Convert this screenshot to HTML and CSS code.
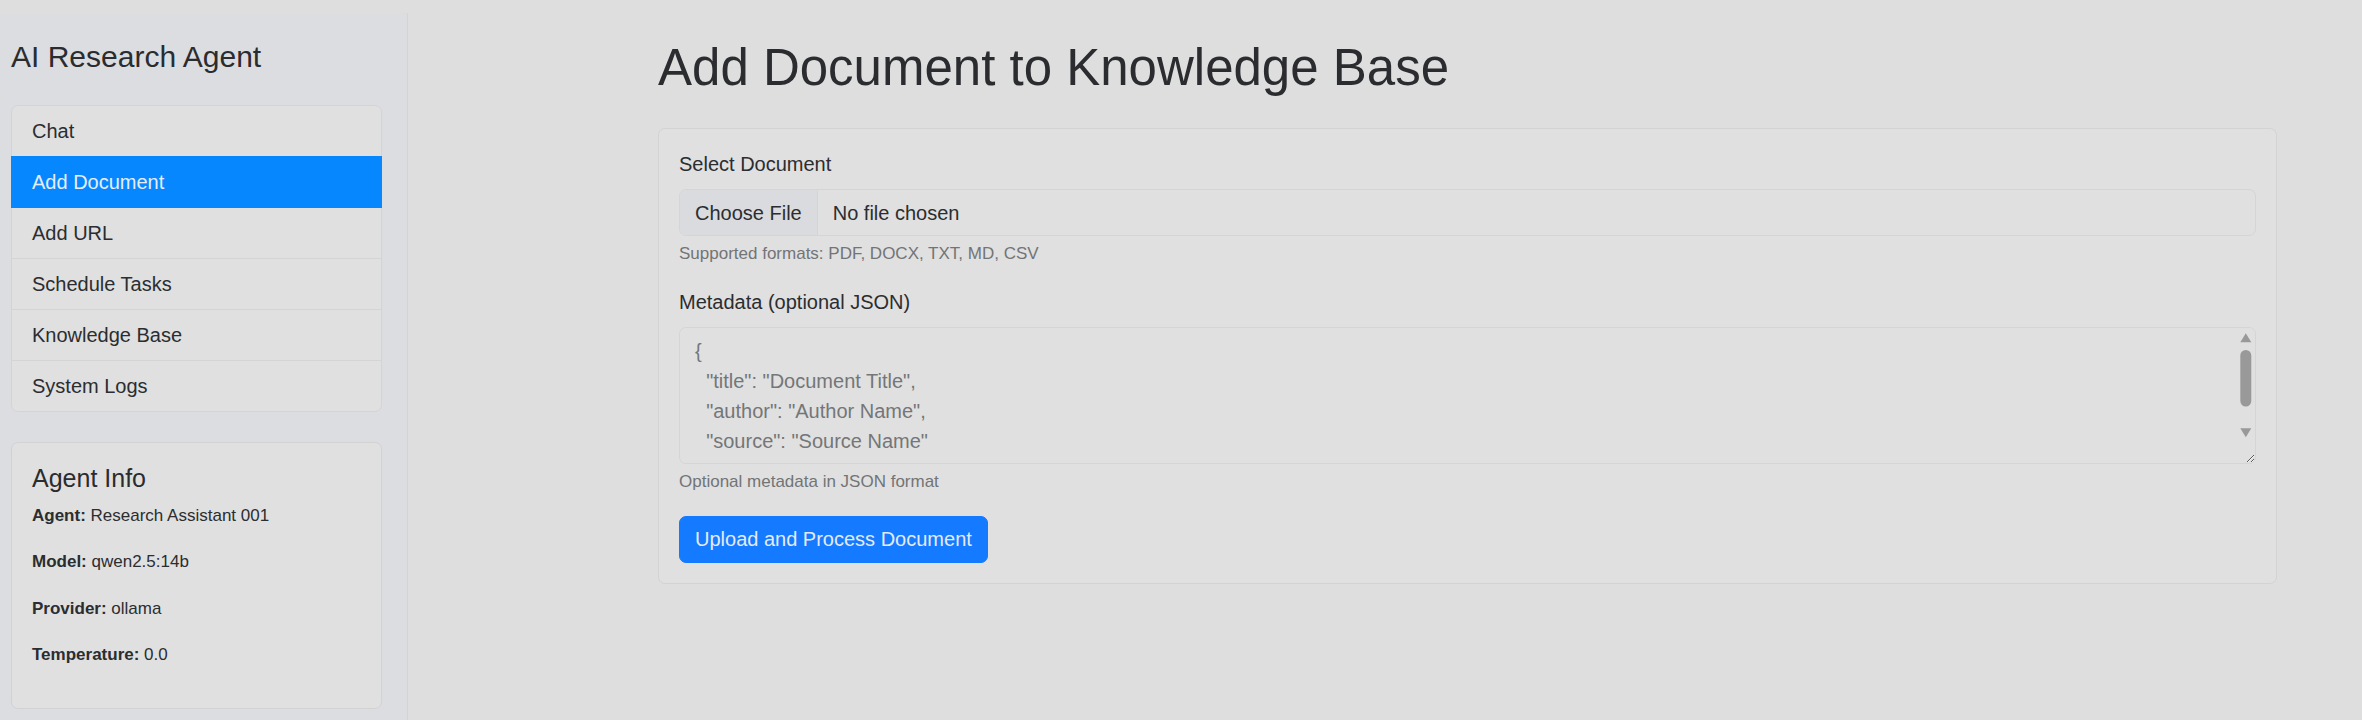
FILE: index.html
```html
<!DOCTYPE html>
<html lang="en">
<head>
<meta charset="utf-8">
<title>AI Research Agent - Add Document</title>
<link rel="stylesheet" href="styles.css">
</head>
<body>
<div class="layout">
  <aside class="sidebar">
    <h4 class="brand">AI Research Agent</h4>
    <nav class="nav-list">
      <a class="nav-item" href="#">Chat</a>
      <a class="nav-item active" href="#">Add Document</a>
      <a class="nav-item" href="#">Add URL</a>
      <a class="nav-item" href="#">Schedule Tasks</a>
      <a class="nav-item" href="#">Knowledge Base</a>
      <a class="nav-item" href="#">System Logs</a>
    </nav>
    <div class="info-card">
      <h5 class="info-title">Agent Info</h5>
      <p class="info-line"><strong>Agent:</strong> Research Assistant 001</p>
      <p class="info-line"><strong>Model:</strong> qwen2.5:14b</p>
      <p class="info-line"><strong>Provider:</strong> ollama</p>
      <p class="info-line"><strong>Temperature:</strong> 0.0</p>
    </div>
  </aside>
  <main class="main">
    <h1 class="page-title">Add Document to Knowledge Base</h1>
    <div class="card">
      <form class="form">
        <div class="field">
          <div class="label">Select Document</div>
          <label class="file-input">
            <input type="file" class="file-hidden">
            <span class="file-btn">Choose File</span>
            <span class="file-name">No file chosen</span>
          </label>
          <div class="hint">Supported formats: PDF, DOCX, TXT, MD, CSV</div>
        </div>
        <div class="field">
          <label class="label" for="meta">Metadata (optional JSON)</label>
          <div class="textarea-wrap">
            <textarea id="meta" class="textarea" rows="4">{
  "title": "Document Title",
  "author": "Author Name",
  "source": "Source Name"
}</textarea>
            <svg class="scrollbar" width="15" height="116" viewBox="0 0 15 116" aria-hidden="true">
              <polygon points="0.3,14.3 5.8,5.3 11.3,14.3" fill="#999999"/>
              <rect x="0.3" y="22" width="11" height="56.6" rx="5.5" fill="#999999"/>
              <polygon points="0.3,100.3 11.3,100.3 5.8,109.3" fill="#999999"/>
            </svg>
          </div>
          <div class="hint">Optional metadata in JSON format</div>
        </div>
        <button type="button" class="btn">Upload and Process Document</button>
      </form>
    </div>
  </main>
</div>
</body>
</html>
```

FILE: styles.css
```css
* {
  box-sizing: border-box;
}

html, body {
  margin: 0;
  padding: 0;
}

body {
  background: #dedede;
  color: #2b2d30;
  font-family: "Liberation Sans", Arial, sans-serif;
  font-size: 20px;
  line-height: 30px;
}

.layout {
  display: flex;
  align-items: stretch;
  min-height: 100vh;
  padding-top: 13px;
}

/* ---------- sidebar ---------- */
.sidebar {
  width: 408px;
  flex: 0 0 408px;
  background: #dcdde0;
  border-right: 1px solid #d3d4d7;
  padding: 26px 25px 0 11px;
}

.brand {
  margin: 0 0 30px;
  font-size: 30px;
  line-height: 36px;
  font-weight: 400;
  color: #2a2c2f;
}

.nav-list {
  display: flex;
  flex-direction: column;
  margin-bottom: 30px;
}

.nav-item {
  display: block;
  position: relative;
  padding: 10px 20px;
  background: #e0e0e0;
  color: #2b2d30;
  text-decoration: none;
  border: 1px solid #d4d4d6;
  margin-top: -1px;
}

.nav-item:first-child {
  margin-top: 0;
  border-radius: 7px 7px 0 0;
}

.nav-item:last-child {
  border-radius: 0 0 7px 7px;
}

.nav-item.active {
  z-index: 2;
  background: #0787fe;
  border-color: #0787fe;
  color: #e6edf8;
}

.info-card {
  background: #e0e0e0;
  border: 1px solid #d2d2d3;
  border-radius: 7px;
  padding: 20px;
}

.info-title {
  margin: 0 0 10px;
  font-size: 25px;
  line-height: 30px;
  font-weight: 400;
  color: #2a2c2f;
}

.info-line {
  margin: 0 0 20px;
  font-size: 17px;
  line-height: 26.25px;
}

.info-line strong {
  font-weight: 700;
}

/* ---------- main ---------- */
.main {
  flex: 1 1 auto;
  padding: 25px 85px 0 250px;
}

.page-title {
  margin: 0 0 30px;
  font-size: 51px;
  line-height: 60px;
  font-weight: 400;
  color: #2a2c2f;
}

.card {
  background: #e0e0e0;
  border: 1px solid #d3d3d3;
  border-radius: 7px;
  padding: 20px;
}

.form {
  display: flex;
  flex-direction: column;
  align-items: flex-start;
}

.field {
  width: 100%;
  margin-bottom: 20px;
}

.label {
  display: block;
  margin-bottom: 10px;
  color: #2b2d30;
}

.file-input {
  display: flex;
  align-items: stretch;
  width: 100%;
  border: 1px solid #d5d5d6;
  border-radius: 7px;
  overflow: hidden;
  background: #e0e0e0;
  cursor: pointer;
}

.file-hidden {
  display: none;
}

.file-btn {
  padding: 7.5px 15px;
  background: #dadbde;
  border-right: 1px solid #d5d5d6;
  color: #2b2d30;
}

.file-name {
  padding: 7.5px 15px;
  color: #2b2d30;
}

.hint {
  margin-top: 5px;
  font-size: 17px;
  line-height: 26.25px;
  color: #727476;
}

.textarea-wrap {
  position: relative;
}

.textarea {
  display: block;
  width: 100%;
  height: 137px;
  padding: 7.5px 15px;
  border: 1px solid #d5d5d6;
  border-radius: 7px;
  background: #e0e0e0;
  color: #747678;
  font-family: inherit;
  font-size: 20px;
  line-height: 30px;
  resize: vertical;
  outline: none;
  scrollbar-width: none;
}

.textarea::-webkit-scrollbar {
  display: none;
}

.scrollbar {
  position: absolute;
  top: 1px;
  right: 1px;
  pointer-events: none;
}

.btn {
  padding: 7.5px 15px;
  border: 1px solid #147aff;
  border-radius: 7px;
  background: #147aff;
  color: #e4eaf5;
  font-family: inherit;
  font-size: 20px;
  line-height: 30px;
  cursor: pointer;
}
```
